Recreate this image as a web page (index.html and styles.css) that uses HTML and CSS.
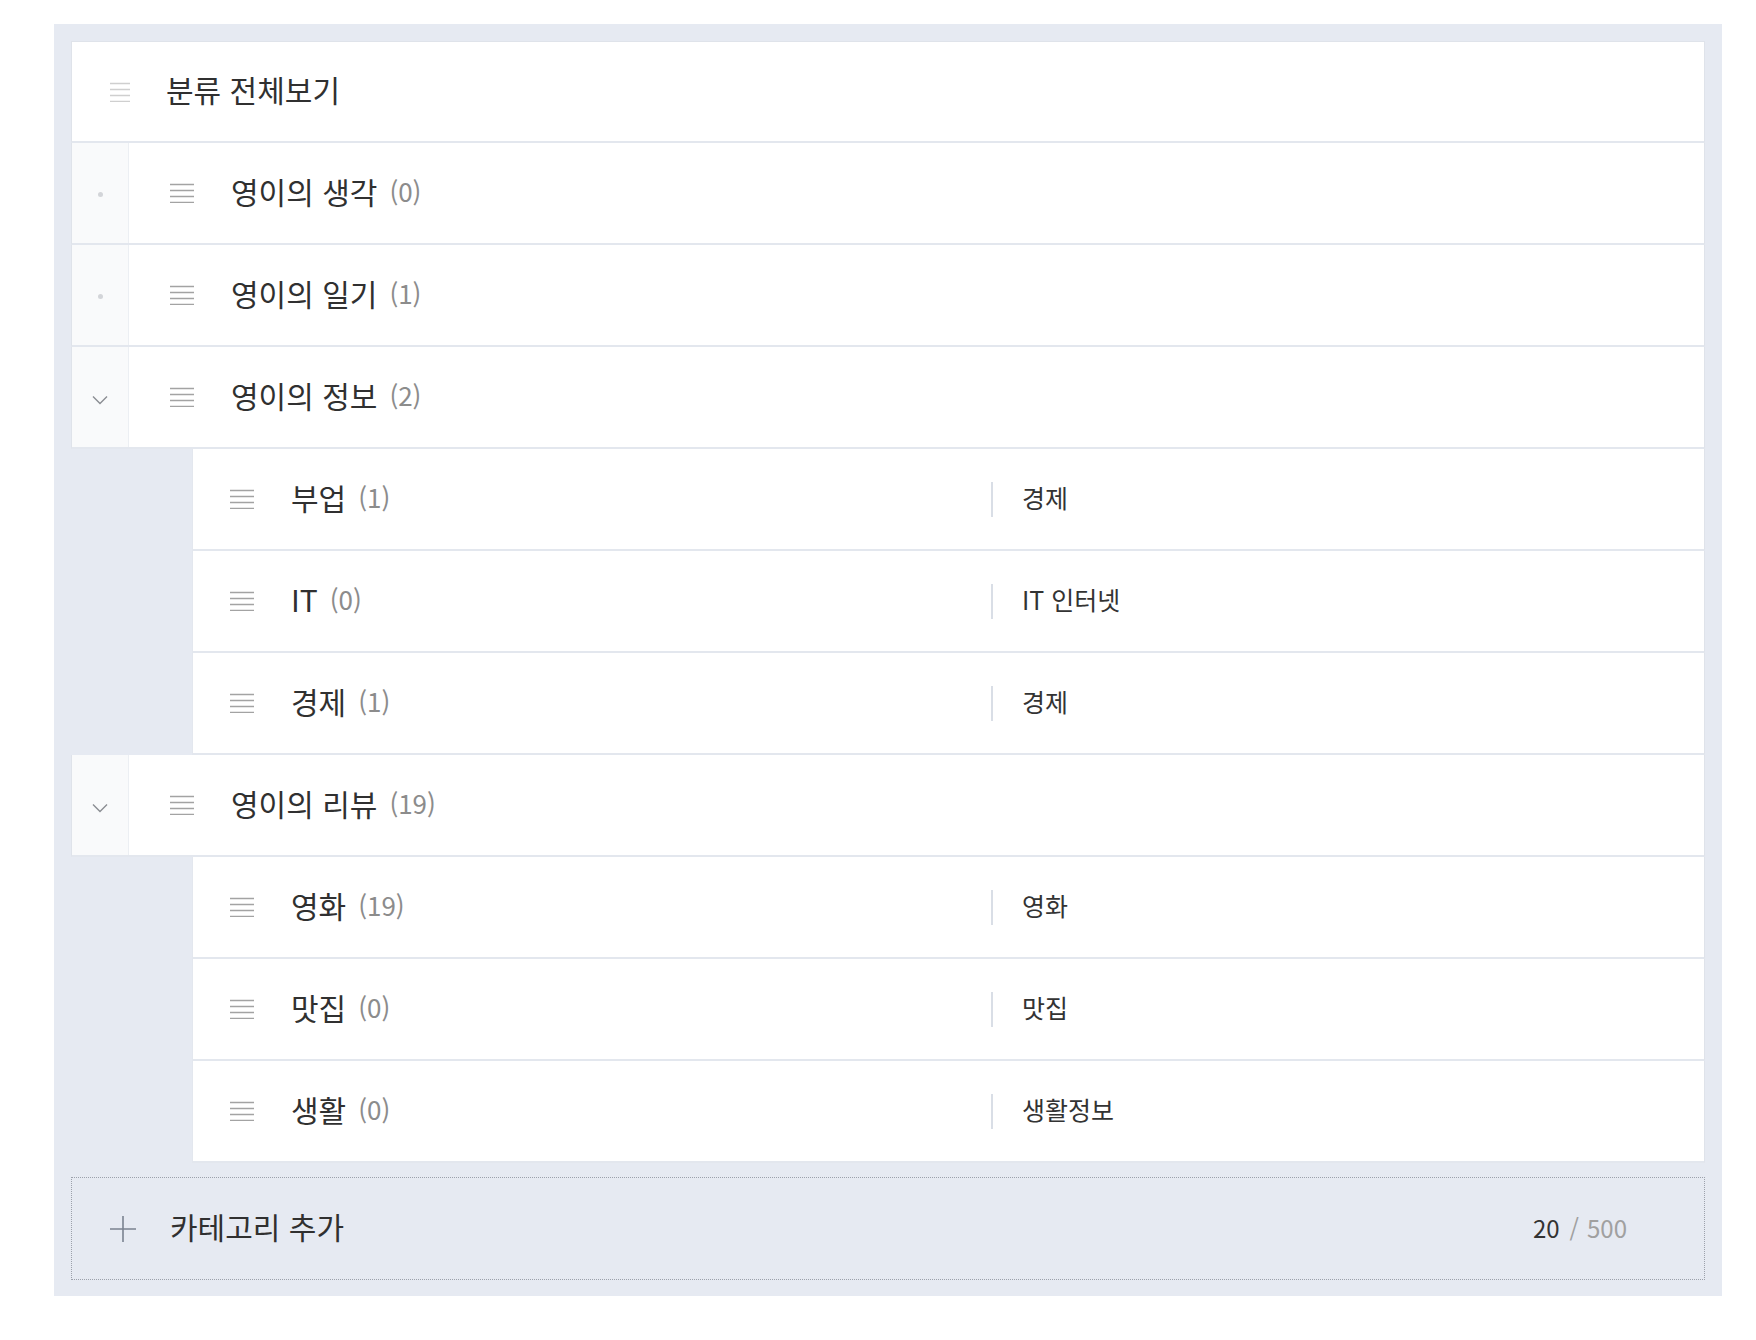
FILE: index.html
```html
<!DOCTYPE html>
<html lang="ko">
<head>
<meta charset="utf-8">
<title>카테고리 관리</title>
<link rel="stylesheet" href="styles.css">
</head>
<body>
<div class="panel">
  <div class="list">
    <div class="row row-head">
      <svg class="handle handle-light" width="20" height="20" viewBox="0 0 20 20"><path d="M0 1.5H20M0 7.5H20M0 13.5H20M0 19.5H20"/></svg>
      <span class="name-text">분류 전체보기</span>
    </div>

    <div class="row row-l1">
      <div class="toggle"><span class="dot"></span></div>
      <svg class="handle" width="24" height="20" viewBox="0 0 24 20"><path d="M0 1.5H24M0 7.5H24M0 13.5H24M0 19.5H24"/></svg>
      <span class="name-text">영이의 생각</span><span class="count">(0)</span>
    </div>

    <div class="row row-l1">
      <div class="toggle"><span class="dot"></span></div>
      <svg class="handle" width="24" height="20" viewBox="0 0 24 20"><path d="M0 1.5H24M0 7.5H24M0 13.5H24M0 19.5H24"/></svg>
      <span class="name-text">영이의 일기</span><span class="count">(1)</span>
    </div>

    <div class="row row-l1">
      <div class="toggle"><svg class="chev" width="16" height="10" viewBox="0 0 16 10"><path d="M1 1.5L8 8.5L15 1.5"/></svg></div>
      <svg class="handle" width="24" height="20" viewBox="0 0 24 20"><path d="M0 1.5H24M0 7.5H24M0 13.5H24M0 19.5H24"/></svg>
      <span class="name-text">영이의 정보</span><span class="count">(2)</span>
    </div>

    <div class="row row-l2">
      <div class="name">
        <svg class="handle" width="24" height="20" viewBox="0 0 24 20"><path d="M0 1.5H24M0 7.5H24M0 13.5H24M0 19.5H24"/></svg>
        <span class="name-text">부업</span><span class="count">(1)</span>
      </div>
      <span class="sep"></span>
      <span class="cat">경제</span>
    </div>

    <div class="row row-l2">
      <div class="name">
        <svg class="handle" width="24" height="20" viewBox="0 0 24 20"><path d="M0 1.5H24M0 7.5H24M0 13.5H24M0 19.5H24"/></svg>
        <span class="name-text">IT</span><span class="count">(0)</span>
      </div>
      <span class="sep"></span>
      <span class="cat">IT 인터넷</span>
    </div>

    <div class="row row-l2">
      <div class="name">
        <svg class="handle" width="24" height="20" viewBox="0 0 24 20"><path d="M0 1.5H24M0 7.5H24M0 13.5H24M0 19.5H24"/></svg>
        <span class="name-text">경제</span><span class="count">(1)</span>
      </div>
      <span class="sep"></span>
      <span class="cat">경제</span>
    </div>

    <div class="row row-l1">
      <div class="toggle"><svg class="chev" width="16" height="10" viewBox="0 0 16 10"><path d="M1 1.5L8 8.5L15 1.5"/></svg></div>
      <svg class="handle" width="24" height="20" viewBox="0 0 24 20"><path d="M0 1.5H24M0 7.5H24M0 13.5H24M0 19.5H24"/></svg>
      <span class="name-text">영이의 리뷰</span><span class="count">(19)</span>
    </div>

    <div class="row row-l2">
      <div class="name">
        <svg class="handle" width="24" height="20" viewBox="0 0 24 20"><path d="M0 1.5H24M0 7.5H24M0 13.5H24M0 19.5H24"/></svg>
        <span class="name-text">영화</span><span class="count">(19)</span>
      </div>
      <span class="sep"></span>
      <span class="cat">영화</span>
    </div>

    <div class="row row-l2">
      <div class="name">
        <svg class="handle" width="24" height="20" viewBox="0 0 24 20"><path d="M0 1.5H24M0 7.5H24M0 13.5H24M0 19.5H24"/></svg>
        <span class="name-text">맛집</span><span class="count">(0)</span>
      </div>
      <span class="sep"></span>
      <span class="cat">맛집</span>
    </div>

    <div class="row row-l2">
      <div class="name">
        <svg class="handle" width="24" height="20" viewBox="0 0 24 20"><path d="M0 1.5H24M0 7.5H24M0 13.5H24M0 19.5H24"/></svg>
        <span class="name-text">생활</span><span class="count">(0)</span>
      </div>
      <span class="sep"></span>
      <span class="cat">생활정보</span>
    </div>
  </div>

  <div class="add">
    <svg class="plus" width="26" height="26" viewBox="0 0 26 26"><path d="M13 0V26M0 13H26"/></svg>
    <span class="add-text">카테고리 추가</span>
    <span class="total"><span class="total-now">20</span><span class="total-slash">/</span><span class="total-max">500</span></span>
  </div>
</div>
</body>
</html>
```

FILE: styles.css
```css
html, body {
  margin: 0;
  padding: 0;
  background: #ffffff;
}

body {
  font-family: "Noto Sans CJK KR", "Noto Sans", "Liberation Sans", sans-serif;
  color: #333333;
}

.panel {
  box-sizing: border-box;
  width: 1668px;
  margin: 24px 0 0 54px;
  padding: 17px 17px 16px 17px;
  background: #e6eaf2;
}

.list {
  display: flex;
  flex-direction: column;
}

.row {
  box-sizing: border-box;
  height: 102px;
  display: flex;
  align-items: center;
  background: #ffffff;
  border-left: 1px solid #dfe3ea;
  border-right: 1px solid #dfe3ea;
  border-bottom: 2px solid #e3e7ee;
}

.row-head {
  height: 102px;
  border-top: 1px solid #dfe3ea;
  padding-left: 38px;
}

.handle {
  flex: none;
  display: block;
  fill: none;
  stroke: #a3a3a3;
  stroke-width: 1.3;
}

.handle-light {
  stroke: #cfcfcf;
}

.name-text {
  font-size: 30px;
  line-height: 1;
  color: #303030;
  white-space: nowrap;
  margin-bottom: 5px;
}

.row-head .name-text {
  margin-left: 36px;
}

.count {
  font-size: 26px;
  line-height: 1;
  color: #8c8c8c;
  margin-left: 12px;
  margin-bottom: 4px;
  white-space: nowrap;
}

/* level 1 */
.row-l1 .toggle {
  box-sizing: border-box;
  flex: none;
  width: 57px;
  align-self: stretch;
  display: flex;
  align-items: center;
  justify-content: center;
  background: #f9fafb;
  border-right: 1px solid #eceff3;
}

.row-l1 .handle {
  margin-left: 41px;
}

.row-l1 .name-text {
  margin-left: 37px;
}

.dot {
  display: block;
  width: 5px;
  height: 5px;
  border-radius: 50%;
  background: #d3d5d9;
  margin-top: 2px;
}

.chev {
  display: block;
  fill: none;
  stroke: #8a8d92;
  stroke-width: 1.4;
  margin-top: 6px;
}

/* level 2 */
.row-l2 {
  margin-left: 121px;
  border-left: 1px solid #e3e7ee;
}

.row-l2 .name {
  box-sizing: border-box;
  flex: none;
  width: 798px;
  display: flex;
  align-items: center;
  padding-left: 37px;
}

.row-l2 .name-text {
  margin-left: 37px;
}

.sep {
  flex: none;
  display: block;
  width: 2px;
  height: 35px;
  background: #d9dee6;
}

.cat {
  margin-left: 29px;
  font-size: 25px;
  line-height: 1;
  color: #333333;
  white-space: nowrap;
  margin-bottom: 3px;
}

/* add row */
.add {
  box-sizing: border-box;
  margin-top: 14px;
  height: 103px;
  display: flex;
  align-items: center;
  padding: 0 77px 0 38px;
  border: 1px dotted #9ca1ab;
  background: #e6eaf2;
}

.plus {
  flex: none;
  display: block;
  fill: none;
  stroke: #7b8390;
  stroke-width: 1.6;
}

.add-text {
  margin-left: 34px;
  font-size: 30px;
  line-height: 1;
  color: #303030;
  margin-bottom: 5px;
}

.total {
  margin-left: auto;
  font-size: 24px;
  line-height: 1;
  white-space: nowrap;
  margin-bottom: 2px;
}

.total-now {
  color: #333333;
}

.total-slash {
  color: #a0a0a0;
  margin: 0 8px 0 10px;
}

.total-max {
  color: #a0a0a0;
}
```
